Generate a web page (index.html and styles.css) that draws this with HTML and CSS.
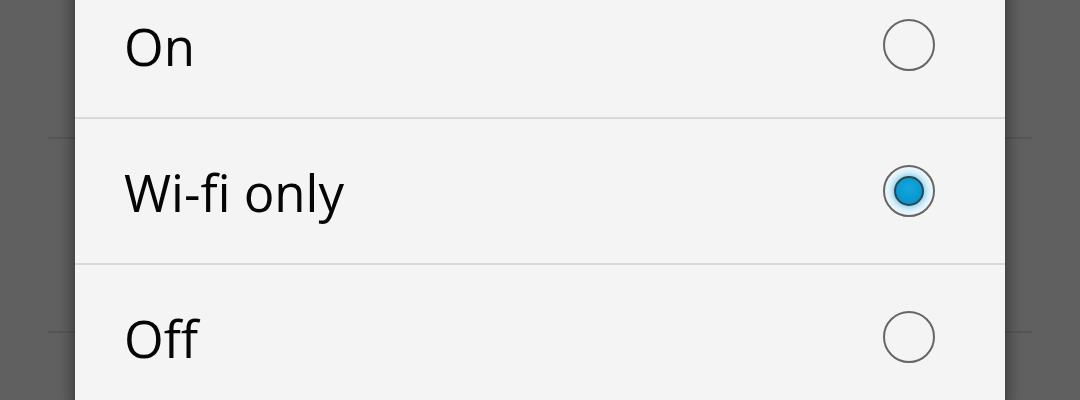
FILE: index.html
```html
<!DOCTYPE html>
<html>
<head>
<meta charset="utf-8">
<link rel="stylesheet" href="styles.css">
</head>
<body>
<div class="screen">
  <div class="list">
    <div class="list-row first"></div>
    <div class="list-row"></div>
    <div class="list-row last"></div>
  </div>
  <div class="dialog">
    <div class="option">
      <span class="label">On</span>
      <span class="radio"></span>
    </div>
    <div class="option">
      <span class="label">Wi-fi only</span>
      <span class="radio checked"><span class="dot"></span></span>
    </div>
    <div class="option">
      <span class="label">Off</span>
      <span class="radio"></span>
    </div>
  </div>
</div>
</body>
</html>
```
FILE: styles.css
```css
html, body {
  margin: 0;
  padding: 0;
  width: 1080px;
  height: 400px;
  overflow: hidden;
  background: #606060;
}
.screen {
  position: relative;
  width: 1080px;
  height: 400px;
  overflow: hidden;
  background: #606060;
  font-family: "Open Sans", "Noto Sans", sans-serif;
}
.list {
  padding: 0 48px;
}
.list-row {
  height: 192px;
  border-bottom: 2px solid #565656;
}
.list-row.first {
  height: 137px;
}
.list-row.last {
  border-bottom: none;
}
.dialog {
  position: absolute;
  left: 75px;
  top: -27px;
  width: 930px;
  background: #f4f4f4;
  box-shadow: 0 0 14px 2px rgba(0, 0, 0, 0.45);
}
.option {
  height: 144px;
  display: flex;
  align-items: center;
  justify-content: space-between;
  padding: 0 70px 0 49px;
  border-bottom: 2px solid #d9d9d9;
}
.label {
  font-size: 51px;
  color: #050505;
  line-height: 1;
  padding-top: 2px;
}
.radio {
  width: 52px;
  height: 52px;
  box-sizing: border-box;
  border: 2px solid #666666;
  border-radius: 50%;
  display: flex;
  align-items: center;
  justify-content: center;
}
.radio.checked {
  background: radial-gradient(circle, #8fd2ee 0, #8fd2ee 14px, #d6eef9 19px, #f2f8fb 24px);
}
.dot {
  width: 30px;
  height: 30px;
  box-sizing: border-box;
  border-radius: 50%;
  border: 2px solid #2d4650;
  background: radial-gradient(circle at 50% 40%, #16a6dc 0, #0a9ad2 55%, #0586bd 100%);
}
```
